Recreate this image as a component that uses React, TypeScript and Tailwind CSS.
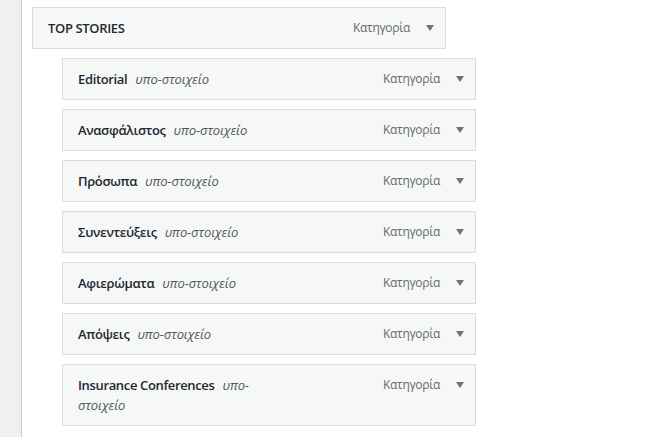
import React from 'react';

interface MenuItem {
    title: string;
    sub: boolean;
}

const items: MenuItem[] = [
    { title: 'TOP STORIES', sub: false },
    { title: 'Editorial', sub: true },
    { title: 'Ανασφάλιστος', sub: true },
    { title: 'Πρόσωπα', sub: true },
    { title: 'Συνεντεύξεις', sub: true },
    { title: 'Αφιερώματα', sub: true },
    { title: 'Απόψεις', sub: true },
    { title: 'Insurance Conferences', sub: true },
];

function Arrow() {
    return (
        <svg width="8" height="6" viewBox="0 0 8 6" className="block">
            <path d="M0 0 H8 L4 6 Z" fill="#6f7378" />
        </svg>
    );
}

export default function App() {
    return (
        <div
            className="flex w-[657px] h-[437px] bg-white overflow-hidden"
            style={{ fontFamily: '"Open Sans", "Noto Sans", sans-serif' }}
        >
            {/* barra lateral */}
            <div className="w-[22px] shrink-0 bg-[#f0f0f1] border-r border-[#c9cacc]" />

            <div className="pl-[10px] pt-[7px] flex flex-col gap-[9px]">
                {items.map(item => (
                    <div
                        key={item.title}
                        className={`relative w-[414px] bg-[#f6f7f7] border border-[#dcdcde] px-[15px] py-[10px] ${item.sub ? 'ml-[30px]' : ''}`}
                    >
                        <div className="mr-[180px] text-[13px] leading-[20px] text-[#1d2327]">
                            <span className="font-semibold tracking-[-0.35px] text-[#23282d]">{item.title}</span>
                            {item.sub && (
                                <span className="ml-[8px] italic text-[#50575e] tracking-[-0.1px]">υπο-στοιχείο</span>
                            )}
                        </div>
                        <div className="absolute right-[11px] top-[10px] flex items-center gap-[16px] h-[20px]">
                            <span className="text-[12px] text-[#646970] tracking-[-0.3px]">Κατηγορία</span>
                            <Arrow />
                        </div>
                    </div>
                ))}
            </div>
        </div>
    );
}
